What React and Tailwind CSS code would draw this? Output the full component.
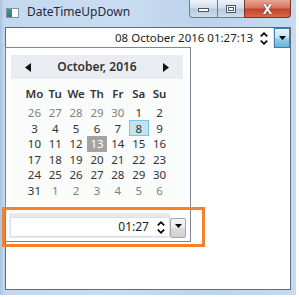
import React from "react";

const Up = () => (
  <svg width="8" height="5" viewBox="0 0 8 5"><polyline points="0.8,4.3 4,1.2 7.2,4.3" fill="none" stroke="#000" strokeWidth="1.7" /></svg>
);
const Down = () => (
  <svg width="8" height="5" viewBox="0 0 8 5"><polyline points="0.8,0.7 4,3.8 7.2,0.7" fill="none" stroke="#000" strokeWidth="1.7" /></svg>
);
const Spinner = () => (
  <div className="flex flex-col items-center gap-[3px] w-[8px]">
    <Up />
    <Down />
  </div>
);
const DropTri = () => (
  <svg width="7" height="4" viewBox="0 0 7 4"><path d="M0 0H7L3.5 4Z" fill="#000" /></svg>
);

const rows = [
  [[26, 1], [27, 1], [28, 1], [29, 1], [30, 1], [1, 0], [2, 0]],
  [[3, 0], [4, 0], [5, 0], [6, 0], [7, 0], [8, 0], [9, 0]],
  [[10, 0], [11, 0], [12, 0], [13, 0], [14, 0], [15, 0], [16, 0]],
  [[17, 0], [18, 0], [19, 0], [20, 0], [21, 0], [22, 0], [23, 0]],
  [[24, 0], [25, 0], [26, 0], [27, 0], [28, 0], [29, 0], [30, 0]],
  [[31, 0], [1, 1], [2, 1], [3, 1], [4, 1], [5, 1], [6, 1]],
];

function Day({ n, other }) {
  if (n === 8 && !other)
    return (
      <div className="h-[15.6px] flex items-center justify-center">
        <div className="w-[20px] h-[16px] flex items-center justify-center bg-[#c4e3ee] border border-[#6fcbea] text-[#333]">8</div>
      </div>
    );
  if (n === 13 && !other)
    return (
      <div className="h-[15.6px] flex items-center justify-center">
        <div className="w-[21px] h-[16px] flex items-center justify-center bg-[#a3a3a3] text-white">13</div>
      </div>
    );
  return (
    <div className={"h-[15.6px] flex items-center justify-center " + (other ? "text-[#808080]" : "text-[#333]")}>{n}</div>
  );
}

export default function App() {
  return (
    <div className="w-[299px] h-[297px] bg-white overflow-hidden relative font-['Noto_Sans',sans-serif]">
      <div className="w-[296px] h-[295px] flex flex-col bg-[linear-gradient(90deg,#a9c3df_0px,#c3d8ee_4px,#c9dcf1_40%,#bcd3ec_70%,#c6dbf1_100%)]">
        {/* title bar */}
        <div className="h-[27px] flex items-start shrink-0 relative">
          <div className="mt-[8px] ml-[6px] w-[13px] h-[10px] border border-[#8a949e] bg-white flex">
            <div className="w-[5px] h-full bg-[linear-gradient(180deg,#3e9c8a,#2f6fa8)]" />
          </div>
          <div className="ml-[8px] mt-[4px] text-[12px] leading-[16px] text-[#1e2a3a]">DateTimeUpDown</div>
          <div className="ml-auto mr-[5px] flex h-[18px]">
            <div className="w-[29px] h-full border border-[#6b7d93] border-t-0 rounded-bl-[4px] bg-[linear-gradient(180deg,#eef3f9,#d2deec_45%,#b9cadf_55%,#cfdcea)] flex items-center justify-center">
              <div className="w-[11px] h-[4px] bg-white border border-[#4a5565] mt-[3px]" />
            </div>
            <div className="w-[26px] h-full border-b border-[#6b7d93] bg-[linear-gradient(180deg,#eef3f9,#d2deec_45%,#b9cadf_55%,#cfdcea)] flex items-center justify-center">
              <div className="w-[10px] h-[8px] border border-[#4a5565] bg-white flex items-center justify-center">
                <div className="w-[6px] h-[4px] border border-[#4a5565]" />
              </div>
            </div>
            <div className="w-[47px] h-full border border-[#7a3326] border-t-0 rounded-br-[4px] bg-[linear-gradient(180deg,#eaa595,#d77660_45%,#c2432b_55%,#d8694b)] flex items-center justify-center">
              <div className="text-white font-bold text-[14px] leading-none [text-shadow:0_0_1px_#3a1a12,0_0_1px_#3a1a12]">X</div>
            </div>
          </div>
        </div>
        {/* client */}
        <div className="flex-1 mx-[5px] border border-[#5e6c7b] bg-white flex flex-col">
          <div className="h-[20px] flex shrink-0">
            <div className="flex-1 flex items-center justify-end pr-[5px] border-r border-[#dde3ea]">
              <span className="text-[11.5px] leading-none text-[#1e1e1e] mr-[7px]">08 October 2016 01:27:13</span>
              <Spinner />
            </div>
            <div className="w-[16px] h-[20px] border border-[#3c7fb1] bg-[linear-gradient(180deg,#e5f4fc,#c4e5f6_50%,#98d1ef_51%,#68b3db)] flex items-start justify-center pt-[7px]">
              <DropTri />
            </div>
          </div>
        </div>
        <div className="h-[5px] shrink-0" />
      </div>

      {/* dropdown popup */}
      <div className="absolute left-[5px] top-[47px] w-[186px] h-[195px] border border-[#7b8794] bg-white flex flex-col">
        <div className="ml-[5px] mt-[7px] w-[172px] h-[146px] bg-[#fafbfb] flex flex-col">
          <div className="h-[24px] bg-[#e9ecf1] flex items-center px-[14px]">
            <svg width="6" height="9" viewBox="0 0 6 9"><path d="M6 0V9L0 4.5Z" fill="#111" /></svg>
            <div className="flex-1 text-center text-[12px] font-semibold text-[#333]">October, 2016</div>
            <svg width="6" height="9" viewBox="0 0 6 9"><path d="M0 0V9L6 4.5Z" fill="#111" /></svg>
          </div>
          <div className="px-[13px] text-[11.5px] leading-none">
            <div className="grid grid-cols-7 h-[16px] mt-[7px] mb-[3px] font-semibold text-[#333]">
              {["Mo", "Tu", "We", "Th", "Fr", "Sa", "Su"].map((d) => (
                <div key={d} className="flex items-center justify-center">{d}</div>
              ))}
            </div>
            {rows.map((r, i) => (
              <div key={i} className="grid grid-cols-7">
                {r.map(([n, o], j) => (
                  <Day key={j} n={n} other={o} />
                ))}
              </div>
            ))}
          </div>
        </div>
        <div className="mt-[12px] ml-[3px] w-[177px] h-[25px] flex">
          <div className="flex-1 bg-[#e7e9ec] pt-[4px] pl-[1px]">
            <div className="h-[20px] bg-white border border-[#dbe0e6] flex items-center justify-end pr-[4px]">
              <span className="text-[12px] leading-none text-[#1e1e1e] mr-[8px]">01:27</span>
              <Spinner />
            </div>
          </div>
          <div className="w-[16px] h-[20px] mt-[5px] border border-[#a7a7a7] rounded-[2px] bg-[linear-gradient(180deg,#f3f3f3,#ebebeb_50%,#dcdcdc_51%,#d0d0d0)] flex items-start justify-center pt-[5px]">
            <DropTri />
          </div>
        </div>
      </div>

      {/* annotation */}
      <div className="absolute left-[2px] top-[207px] w-[203px] h-[40px] border-[3px] border-[#f5822a]" />
    </div>
  );
}
